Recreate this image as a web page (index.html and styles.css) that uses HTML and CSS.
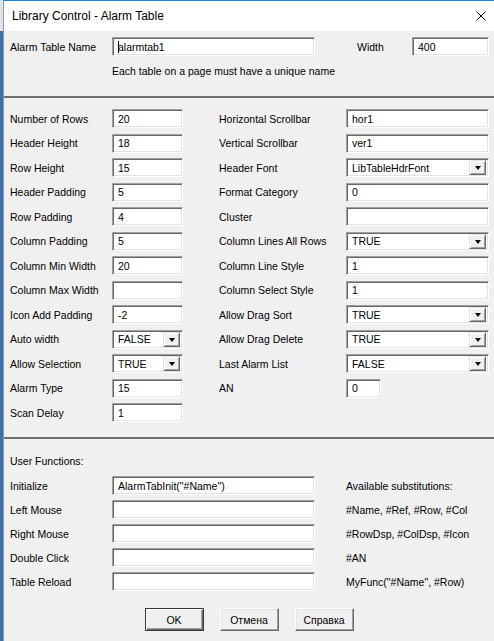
FILE: index.html
```html
<!DOCTYPE html>
<html>
<head>
<meta charset="utf-8">
<link rel="stylesheet" href="styles.css">
</head>
<body>
<div class="screen">
  <div class="strip"><div class="strip-top"></div><div class="strip-bottom"></div></div>
  <div class="window">
    <div class="titlebar">
      <span class="title">Library Control - Alarm Table</span>
      <svg class="close" width="10" height="10" viewBox="0 0 10 10"><path d="M0.5 0.5 L9.5 9.5 M9.5 0.5 L0.5 9.5" stroke="#000" stroke-width="1" fill="none"/></svg>
    </div>
    <div class="body">
      <section class="sec-name">
        <span class="lbl">Alarm Table Name</span>
        <div class="field"><span class="caret"></span>alarmtab1</div>
        <span></span>
        <span class="lbl">Width</span>
        <div class="field">400</div>
        <span></span>
        <div class="hint">Each table on a page must have a unique name</div>
      </section>

      <section class="sec-props">
        <span class="lbl">Number of Rows</span><div class="field">20</div><span></span>
        <span class="lbl">Horizontal Scrollbar</span><div class="field">hor1</div>

        <span class="lbl">Header Height</span><div class="field">18</div><span></span>
        <span class="lbl">Vertical Scrollbar</span><div class="field">ver1</div>

        <span class="lbl">Row Height</span><div class="field">15</div><span></span>
        <span class="lbl">Header Font</span><div class="field select"><span class="val">LibTableHdrFont</span><span class="dd"><i></i></span></div>

        <span class="lbl">Header Padding</span><div class="field">5</div><span></span>
        <span class="lbl">Format Category</span><div class="field">0</div>

        <span class="lbl">Row Padding</span><div class="field">4</div><span></span>
        <span class="lbl">Cluster</span><div class="field"></div>

        <span class="lbl">Column Padding</span><div class="field">5</div><span></span>
        <span class="lbl">Column Lines All Rows</span><div class="field select"><span class="val">TRUE</span><span class="dd"><i></i></span></div>

        <span class="lbl">Column Min Width</span><div class="field">20</div><span></span>
        <span class="lbl">Column Line Style</span><div class="field">1</div>

        <span class="lbl">Column Max Width</span><div class="field"></div><span></span>
        <span class="lbl">Column Select Style</span><div class="field">1</div>

        <span class="lbl">Icon Add Padding</span><div class="field">-2</div><span></span>
        <span class="lbl">Allow Drag Sort</span><div class="field select"><span class="val">TRUE</span><span class="dd"><i></i></span></div>

        <span class="lbl">Auto width</span><div class="field select"><span class="val">FALSE</span><span class="dd"><i></i></span></div><span></span>
        <span class="lbl">Allow Drag Delete</span><div class="field select"><span class="val">TRUE</span><span class="dd"><i></i></span></div>

        <span class="lbl">Allow Selection</span><div class="field select"><span class="val">TRUE</span><span class="dd"><i></i></span></div><span></span>
        <span class="lbl">Last Alarm List</span><div class="field select"><span class="val">FALSE</span><span class="dd"><i></i></span></div>

        <span class="lbl">Alarm Type</span><div class="field">15</div><span></span>
        <span class="lbl">AN</span><div class="field short">0</div>

        <span class="lbl">Scan Delay</span><div class="field">1</div><span></span>
        <span></span><span></span>
      </section>

      <section class="sec-funcs">
        <div class="uf">User Functions:</div>
        <div class="fgrid">
          <span class="lbl">Initialize</span><div class="field">AlarmTabInit("#Name")</div><span></span><span class="note">Available substitutions:</span>
          <span class="lbl">Left Mouse</span><div class="field"></div><span></span><span class="note">#Name, #Ref, #Row, #Col</span>
          <span class="lbl">Right Mouse</span><div class="field"></div><span></span><span class="note">#RowDsp, #ColDsp, #Icon</span>
          <span class="lbl">Double Click</span><div class="field"></div><span></span><span class="note">#AN</span>
          <span class="lbl">Table Reload</span><div class="field"></div><span></span><span class="note">MyFunc("#Name", #Row)</span>
        </div>
        <div class="buttons">
          <div class="btn default">OK</div>
          <div class="btn">Отмена</div>
          <div class="btn">Справка</div>
        </div>
      </section>
    </div>
  </div>
</div>
</body>
</html>
```
FILE: styles.css
```css
* { box-sizing: border-box; }
html, body { margin: 0; padding: 0; }
body {
  width: 494px;
  height: 641px;
  overflow: hidden;
  font-family: "Liberation Sans", Arial, sans-serif;
  font-size: 10.5px;
  color: #000;
  background: #f0f0f0;
}
.screen { display: flex; height: 641px; }
.strip { width: 3px; display: flex; flex-direction: column; }
.strip-top { height: 31px; background: #e4e4e4; }
.strip-bottom { flex: 1; background: #3d6fae; }
.window {
  flex: 1;
  display: flex;
  flex-direction: column;
  border-top: 1px solid #1a7fd6;
  border-left: 1px solid #8e9aab;
}
.titlebar {
  height: 30px;
  background: #fff;
  display: flex;
  align-items: center;
  justify-content: space-between;
  padding: 0 8px 0 8px;
}
.title { font-size: 12px; position: relative; top: 0px; }
.close { margin-right: 0; }
.body { flex: 1; background: #f0f0f0; display: flex; flex-direction: column; }

.lbl { display: flex; align-items: center; white-space: nowrap; }

.field {
  height: 19px;
  background: #fff;
  border: 1px solid;
  border-color: #a0a0a0 #fff #fff #a0a0a0;
  box-shadow: inset 1px 1px 0 #696969, inset -1px -1px 0 #e3e3e3;
  display: flex;
  align-items: center;
  padding-left: 5px;
  white-space: nowrap;
  position: relative;
}
.caret {
  display: inline-block;
  width: 1px;
  height: 12px;
  background: #000;
  margin-right: -1px;
}
.select { padding-right: 2px; padding-top: 0; padding-bottom: 0; align-items: stretch; }
.select .val { flex: 1; display: flex; align-items: center; }
.dd {
  width: 17px;
  margin: 1px 0 1px 0;
  background: #f0f0f0;
  border: 1px solid;
  border-color: #e3e3e3 #696969 #696969 #e3e3e3;
  box-shadow: inset 1px 1px 0 #fff, inset -1px -1px 0 #a0a0a0;
  display: flex;
  align-items: center;
  justify-content: center;
}
.dd i {
  display: block;
  width: 0; height: 0;
  border-left: 3.5px solid transparent;
  border-right: 3.5px solid transparent;
  border-top: 4px solid #000;
  margin-top: 1px;
}

.sec-name {
  height: 65px;
  padding: 6px 5px 0 6px;
  display: grid;
  grid-template-columns: 102px 203px 42px 55px 77px;
  grid-template-rows: 19px auto;
  align-content: start;
}
.hint { grid-column: 2 / 6; margin-top: 8px; line-height: 14px; }

.sec-props {
  border-top: 2px solid #6f6f6f;
  padding: 11px 5px 15px 6px;
  display: grid;
  grid-template-columns: 102px 71px 36px 127px 143px;
  grid-auto-rows: 19px;
  row-gap: 5.5px;
}
.short { width: 35px; }

.sec-funcs {
  flex: 1;
  border-top: 2px solid #6f6f6f;
  padding: 15px 5px 0 6px;
  display: flex;
  flex-direction: column;
}
.uf { line-height: 14px; height: 14px; }
.fgrid {
  margin-top: 8px;
  display: grid;
  grid-template-columns: 102px 203px 31px 1fr;
  grid-auto-rows: 19px;
  row-gap: 5px;
}
.note { display: flex; align-items: center; white-space: nowrap; }
.buttons {
  margin-top: 17px;
  display: flex;
  justify-content: center;
  gap: 16px;
  padding-right: 1px;
}
.btn {
  width: 59px;
  height: 23px;
  display: flex;
  align-items: center;
  justify-content: center;
  background: #f0f0f0;
  border: 1px solid;
  border-color: #fff #696969 #696969 #fff;
  box-shadow: inset -1px -1px 0 #a0a0a0, inset 1px 1px 0 #e3e3e3;
  font-size: 10.5px;
}
.btn.default {
  border-color: #3a3a3a;
  box-shadow: inset 1px 1px 0 #fff, inset -1px -1px 0 #696969, inset -2px -2px 0 #a0a0a0;
}
```
